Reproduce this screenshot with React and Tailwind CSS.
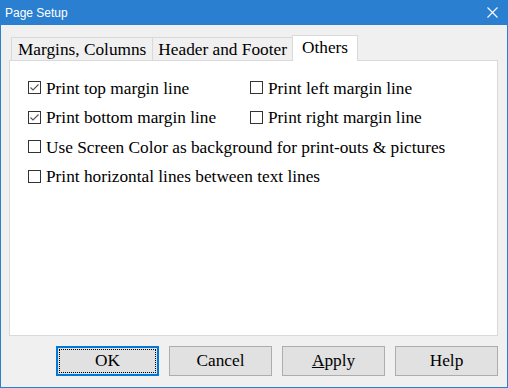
import React from "react";

const serif = "font-['Liberation_Serif',serif]";

function Check({ checked, label }) {
  return (
    <label className="flex h-[29.5px] items-center gap-[5px] whitespace-nowrap">
      <span className="flex h-[13px] w-[13px] shrink-0 items-center justify-center border border-[#333] bg-white">
        {checked && (
          <svg width="11" height="11" viewBox="0 0 11 11" aria-hidden="true">
            <polyline
              points="1.5,5.5 4,8 9.5,2.5"
              fill="none"
              stroke="#555"
              strokeWidth="1.1"
            />
          </svg>
        )}
      </span>
      <span className="pt-[1px] text-[17.3px] leading-none text-black">{label}</span>
    </label>
  );
}

function Button({ children, focused }) {
  return (
    <button
      className={
        "relative h-[30px] w-[103px] bg-[#e1e1e1] text-[17.3px] leading-none text-black " +
        (focused ? "border-2 border-[#0078d7]" : "border border-[#adadad]")
      }
    >
      {focused && (
        <span className="pointer-events-none absolute inset-[1px] border border-dotted border-black" />
      )}
      {children}
    </button>
  );
}

export default function App() {
  return (
    <div
      className={
        "flex h-[388px] w-[508px] flex-col border-x border-b border-[#2b7fd0] bg-[#f0f0f0] " +
        serif
      }
    >
      {/* Title bar */}
      <div className="-mx-px flex h-[25px] shrink-0 items-center justify-between bg-[#2b7fd0] pl-[5px] pr-[10px]">
        <span className="font-['Liberation_Sans',sans-serif] text-[12px] text-white">
          Page Setup
        </span>
        <svg width="11" height="11" viewBox="0 0 11 11" aria-hidden="true">
          <path d="M0.5 0.5 L10.5 10.5 M10.5 0.5 L0.5 10.5" stroke="#fff" strokeWidth="1.1" />
        </svg>
      </div>

      {/* Tabs */}
      <div className="ml-[8px] mr-[9px] mt-[10px] flex flex-col">
        <div className="relative z-10 flex h-[25px] items-end pl-[2px]">
          <div className="flex h-[23px] items-center border border-b-0 border-[#d9d9d9] bg-[#f0f0f0] px-[6px] pt-[1px] text-[17.3px] leading-none">
            Margins, Columns
          </div>
          <div className="-ml-px flex h-[23px] items-center border border-b-0 border-[#d9d9d9] bg-[#f0f0f0] px-[5px] pt-[1px] text-[17.3px] leading-none">
            Header and Footer
          </div>
          <div className="-mb-px -ml-px flex h-[26px] items-center border border-b-0 border-[#d9d9d9] bg-white px-[9px] pb-[2px] text-[17.3px] leading-none">
            Others
          </div>
        </div>

        {/* Panel */}
        <div className="h-[276px] border border-[#d9d9d9] bg-white pl-[18px] pt-[12px]">
          <div className="grid grid-cols-[222px_1fr]">
            <Check checked label="Print top margin line" />
            <Check label="Print left margin line" />
            <Check checked label="Print bottom margin line" />
            <Check label="Print right margin line" />
          </div>
          <Check label="Use Screen Color as background for print-outs & pictures" />
          <Check label="Print horizontal lines between text lines" />
        </div>
      </div>

      {/* Buttons */}
      <div className="mr-[9px] mt-[10px] flex justify-end gap-[10px]">
        <Button focused>OK</Button>
        <Button>Cancel</Button>
        <Button>
          <span className="underline">A</span>pply
        </Button>
        <Button>Help</Button>
      </div>
    </div>
  );
}
